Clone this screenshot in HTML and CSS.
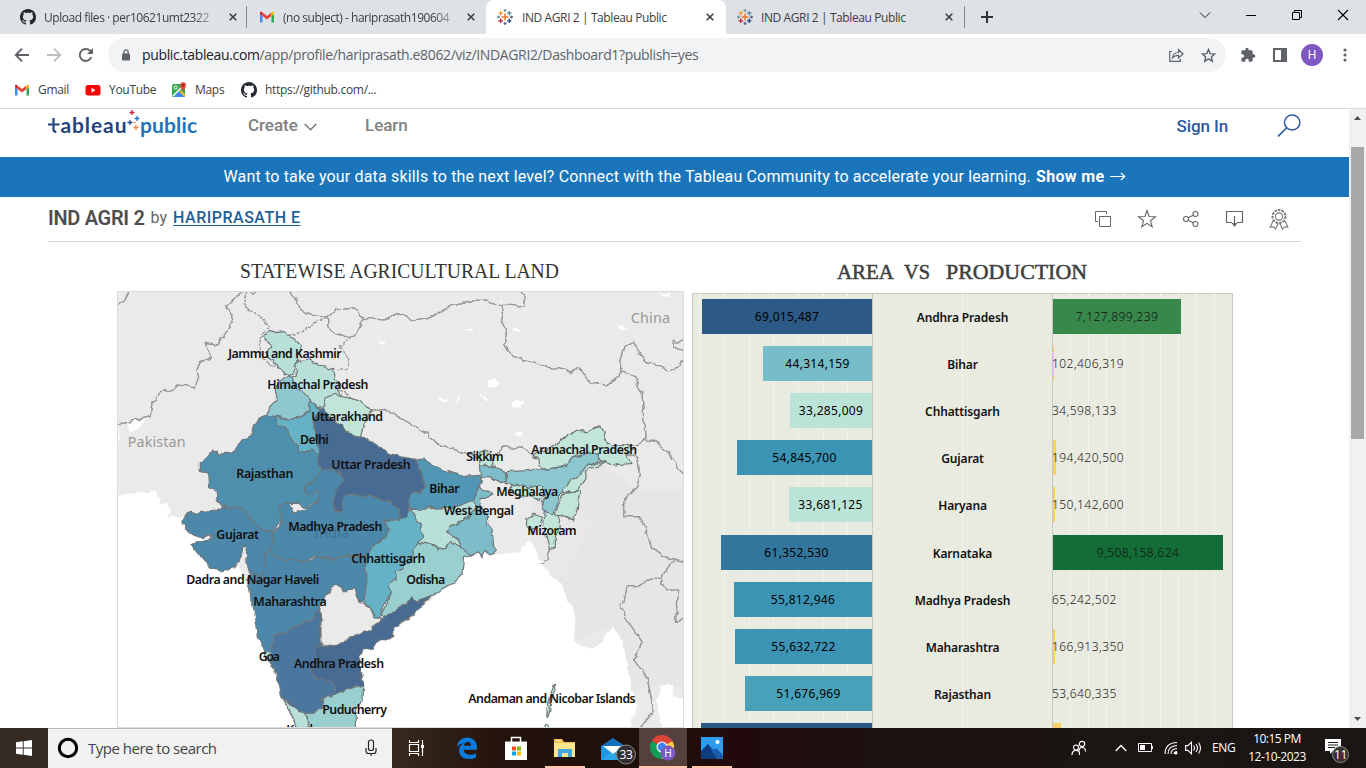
FILE: index.html
```html
<!DOCTYPE html>
<html lang="en">
<head>
<meta charset="utf-8">
<title>IND AGRI 2 | Tableau Public</title>
<link rel="stylesheet" href="styles.css">
</head>
<body>
<svg class="defs" width="0" height="0">
  <symbol id="github" viewBox="0 0 16 16"><path fill="#24292f" d="M8 0C3.58 0 0 3.58 0 8c0 3.54 2.29 6.53 5.47 7.59.4.07.55-.17.55-.38 0-.19-.01-.82-.01-1.49-2.01.37-2.53-.49-2.69-.94-.09-.23-.48-.94-.82-1.13-.28-.15-.68-.52-.01-.53.63-.01 1.08.58 1.23.82.72 1.21 1.87.87 2.33.66.07-.52.28-.87.51-1.07-1.78-.2-3.64-.89-3.64-3.95 0-.87.31-1.59.82-2.15-.08-.2-.36-1.02.08-2.12 0 0 .67-.21 2.2.82.64-.18 1.32-.27 2-.27s1.36.09 2 .27c1.53-1.04 2.2-.82 2.2-.82.44 1.1.16 1.92.08 2.12.51.56.82 1.27.82 2.15 0 3.07-1.87 3.75-3.65 3.95.29.25.54.73.54 1.48 0 1.07-.01 1.93-.01 2.2 0 .21.15.46.55.38A8.01 8.01 0 0 0 16 8c0-4.42-3.58-8-8-8z"/></symbol>
  <symbol id="gmail" viewBox="0 0 16 16"><path fill="#4285f4" d="M1 13.500h2.500V7L1 5z"/><path fill="#34a853" d="M12.500 13.500H15V5l-2.500 2z"/><path fill="#ea4335" d="M3.500 3.500 8 7l4.500-3.500V7L8 10.500 3.500 7z"/><path fill="#c5221f" d="M1 5V4c0-1.300 1.500-1.700 2.500-.5V7z"/><path fill="#fbbc04" d="M15 5V4c0-1.300-1.500-1.700-2.500-.5V7z"/></symbol>
  <symbol id="tableau" viewBox="0 0 16 16"><g fill="none" stroke-width="1.300"><path stroke="#eb762b" d="M8 4.500v7M4.500 8h7" stroke-width="1.500"/><path stroke="#e8a033" d="M3.700 2v4.500M1.500 4.200H6"/><path stroke="#5b879b" d="M12.300 2v4.500M10 4.200h4.500"/><path stroke="#c72035" d="M3.700 9.600v4.400M1.500 11.800H6"/><path stroke="#1f457e" d="M12.300 9.600v4.400M10 11.800h4.500"/><path stroke="#7199a6" d="M8 0v3M6.500 1.500h3M1.500 6.500v3M0 8h3"/><path stroke="#5c6692" d="M14.500 6.500v3M13 8h3M8 13v3M6.500 14.500h3"/></g></symbol>
  <symbol id="close" viewBox="0 0 8 8"><path stroke="#3c4043" stroke-width="1.600" d="m.7.7 6.600 6.600m0-6.600L.7 7.300"/></symbol>
</svg>

<header class="tabs">
  <div class="tab first"><svg class="i16"><use href="#github"/></svg><span class="label fade">Upload files · per10621umt2322</span><svg class="x"><use href="#close"/></svg></div>
  <div class="tab line"><svg class="i16"><use href="#gmail"/></svg><span class="label fade">(no subject) - hariprasath190604</span><svg class="x"><use href="#close"/></svg></div>
  <div class="tab active"><svg class="i16"><use href="#tableau"/></svg><span class="label t">IND AGRI 2 | Tableau Public</span><svg class="x"><use href="#close"/></svg></div>
  <div class="tab last"><svg class="i16"><use href="#tableau"/></svg><span class="label t">IND AGRI 2 | Tableau Public</span><svg class="x"><use href="#close"/></svg></div>
  <svg class="plus" width="12" height="12"><path stroke="#30343a" stroke-width="2" d="M6 0v12M0 6h12"/></svg>
  <div class="wctl">
    <svg width="12" height="12"><path fill="none" stroke="#222" d="m1 3.500 5 5 5-5"/></svg>
    <svg width="12" height="12"><path stroke="#000" d="M1 6.500h10"/></svg>
    <svg width="12" height="12"><path fill="none" stroke="#000" d="M1.500 3.500h7v7h-7zM3.500 3.500v-2h7v7h-2"/></svg>
    <svg width="12" height="12"><path stroke="#000" stroke-width="1.100" d="m1 1 10 10M11 1 1 11"/></svg>
  </div>
</header>

<div class="toolbar">
  <svg class="nav" width="80" height="16" viewBox="0 0 80 16"><g fill="none" stroke-width="1.900"><path stroke="#5f6368" d="M15 8H2m6-6.300L1.700 8 8 14.300"/><path stroke="#bcbfc3" d="M33 8h13m-6-6.300L46.300 8 40 14.300"/><path stroke="#5f6368" d="M77.300 10.200A6 6 0 1 1 76 3.700l1.700 2"/></g><path fill="#5f6368" d="M79 1v6h-6z"/></svg>
  <div class="omni">
    <svg width="8" height="12"><rect y="4.500" width="8" height="7" rx="1" fill="#5f6368"/><path fill="none" stroke="#5f6368" stroke-width="1.300" d="M1.900 5V3a2.100 2.100 0 0 1 4.200 0v2"/></svg>
    <span class="url"><b>public.tableau.com</b>/app/profile/hariprasath.e8062/viz/INDAGRI2/Dashboard1?publish=yes</span>
    <svg width="15" height="14"><g fill="none" stroke="#5f6368" stroke-width="1.200"><path d="M3 3.500H.7v9.800h10.600v-2.500"/><path d="M3.500 10c.3-4 2.500-5.500 6-5.500V1.700L14 6l-4.500 4V7.300C7 7.300 5 8 3.500 10z"/></g></svg>
    <svg width="15" height="15"><path fill="none" stroke="#5f6368" stroke-width="1.400" d="m7.500 1.500 1.700 4.100 4.500.4-3.400 2.900 1 4.400-3.800-2.400-3.800 2.400 1-4.400L1.300 6l4.500-.4z"/></svg>
  </div>
  <div class="ext">
    <svg width="16" height="16" viewBox="0 0 24 24"><path fill="#5f6368" d="M20.500 11H19V7c0-1.100-.9-2-2-2h-4V3.500a2.500 2.500 0 0 0-5 0V5H4c-1.100 0-2 .9-2 2v3.800h1.500a2.700 2.700 0 0 1 0 5.400H2V20c0 1.100.9 2 2 2h3.800v-1.500a2.700 2.700 0 0 1 5.400 0V22H17c1.100 0 2-.9 2-2v-4h1.500a2.500 2.500 0 0 0 0-5z"/></svg>
    <svg width="14" height="14"><path fill="#5f6368" fill-rule="evenodd" d="M0 0h14v14H0zM2 2v10h6V2z"/></svg>
    <span class="avatar">H</span>
    <svg width="4" height="14"><g fill="#5f6368"><circle cx="2" cy="2" r="1.600"/><circle cx="2" cy="7" r="1.600"/><circle cx="2" cy="12" r="1.600"/></g></svg>
  </div>
</div>

<nav class="bookmarks">
  <a class="bm gm"><svg class="i16"><use href="#gmail"/></svg>Gmail</a>
  <a class="bm yt"><svg class="i16"><rect x=".5" y="3" width="15" height="10.500" rx="2.500" fill="#f00"/><path fill="#fff" d="m6.500 5.700 4 2.500-4 2.500z"/></svg>YouTube</a>
  <a class="bm mp"><svg class="i16"><rect x="1" y="2" width="13" height="13" rx="1.500" fill="#34a853"/><path fill="#4285f4" d="M3 15 8.500 9l5.500 5v1z"/><path stroke="#f4f4f4" stroke-width="1.700" d="m2 14 10-10"/><path stroke="#fbc02d" stroke-width="2" d="m9 9 5 5"/><path fill="#e04436" d="M12 9.500C11 7 9.200 6 9.200 3.200a2.900 2.900 0 0 1 5.800 0C15 6 13 7 12 9.500z"/><circle cx="12.100" cy="3.200" r="1.100" fill="#8c2a24"/><circle cx="4.700" cy="5.500" r="1.600" fill="none" stroke="#fff"/></svg>Maps</a>
  <a class="bm gh"><svg class="i16"><use href="#github"/></svg>https://github.com/...</a>
</nav>

<main class="view">
  <div class="page">
    <div class="site">
      <svg class="logo" width="152" height="28" viewBox="0 0 152 28">
        <path fill="none" stroke="#1f447e" stroke-width="2.200" d="M0 15.500h11.500M5.500 9v11.500q0 2.300 2.800 2.300"/>
        <text x="12.500" y="23.500" textLength="66" class="lg dark">ableau</text>
        <g stroke-width="1.300"><path stroke="#274780" d="M79.500 13.500h5M82 11v5"/><path stroke="#c72035" d="M81.500 3.500h5M84 1v5"/><path stroke="#1f74ba" d="M86.500 9.500h5M89 7v5"/><path stroke="#eb8a45" d="M85.500 18.500h5M88 16v5M85.500 13.500h2"/></g>
        <text x="92" y="23.500" textLength="57" class="lg blue">public</text>
      </svg>
      <span class="menu create">Create</span><svg class="chev" width="13" height="8"><path fill="none" stroke="#777" stroke-width="1.500" d="m.7 1 5.800 5.700L12.300 1"/></svg>
      <span class="menu learn">Learn</span>
      <span class="signin">Sign In</span>
      <svg class="search" width="24" height="24"><ellipse cx="15.200" cy="8.500" rx="7.700" ry="7.500" fill="none" stroke="#2b59a0" stroke-width="1.500"/><path stroke="#2b59a0" stroke-width="1.700" d="M9.500 14 1 22.300"/></svg>
    </div>
    <div class="banner"><span class="msg">Want to take your data skills to the next level? Connect with the Tableau Community to accelerate your learning.</span><b>Show me</b><svg width="16" height="9"><path fill="none" stroke="#fff" stroke-width="1.200" d="M0 4.500h14.500M11 1l3.700 3.500L11 8"/></svg></div>
    <div class="titlebar">
      <span class="name">IND AGRI 2</span><span class="by">by</span><a class="author">HARIPRASATH E</a>
      <div class="acts">
        <svg width="18" height="18"><path fill="none" stroke="#666" d="M4 11.500H1.500v-10h11V4M5.500 6.500h11v10h-11z"/></svg>
        <svg width="20" height="20"><path fill="none" stroke="#666" stroke-width="1.100" d="m10 1.500 2.100 6 6.400.3-5 4 1.700 6-5.200-3.500-5.200 3.500 1.700-6-5-4 6.400-.3z"/></svg>
        <svg width="18" height="18"><g fill="none" stroke="#666" stroke-width="1.100"><circle cx="4" cy="9" r="2.500"/><circle cx="13.500" cy="4" r="2.500"/><circle cx="13.500" cy="14" r="2.500"/><path d="m6.200 7.800 5-2.600m-5 5 5 2.600"/></g></svg>
        <svg width="19" height="18"><path fill="none" stroke="#666" stroke-width="1.200" d="M7 12.500H1.500v-11h16v11H12M9.500 6v9"/><path fill="#666" d="M6.500 13h6l-3 4z"/></svg>
        <svg width="20" height="22"><g fill="none" stroke="#777" stroke-width="1.100"><circle cx="10" cy="8.500" r="6.500" stroke-width="1.900" stroke-dasharray="2.600 1"/><circle cx="10" cy="8.500" r="3.600"/><path d="m4 13-2.800 6 3.300-.3 2 2.300 2.700-5.500m6.800-2.500 2.800 6-3.300-.3-2 2.300-2.700-5.500"/></g></svg>
      </div>
    </div>

    <div class="dash">
      <section class="left">
        <svg class="heading" width="567" height="49"><text x="123" y="36" textLength="319" lengthAdjust="spacingAndGlyphs" class="h1">STATEWISE AGRICULTURAL LAND</text></svg>
        <svg class="map" width="567" height="437" viewBox="0 3 1701 1311">
          <defs><filter id="rough" x="0" y="0" width="1" height="1" color-interpolation-filters="sRGB"><feTurbulence type="fractalNoise" baseFrequency="0.04" numOctaves="2" seed="4"/><feDisplacementMap in="SourceGraphic" scale="18" xChannelSelector="R" yChannelSelector="G"/></filter></defs>
          <rect x="0" y="3" width="1701" height="1311" fill="#eaeaea"/>
          <g filter="url(#rough)">
            <rect x="-20" y="-20" width="1750" height="1360" fill="#eaeaea"/>
            <path fill="#e6e6e6" d="M1250 560 1450 520 1560 600 1704 600V1185L1540 1200 1489 1009 1369 1054 1344 919 1234 750z"/>
            <path fill="#f0f0f0" d="M760 30 1000 150 1150 110 1160 220 950 300 800 240zM1100 780 1360 620 1430 700 1340 860z" opacity=".3"/>
            <path fill="#fff" d="M-20 615 120 605 130 640 155 640 155 680 300 680 400 900 480 1150 600 1340-20 1340zM690 1340 700 1200 725 1100 800 1040 900 970 1025 850 1040 795 1159 789 1209 784 1234 748 1259 784 1279 834 1304 864 1335 880 1344 919 1369 954 1375 990 1369 1054 1419 1079 1449 1059 1489 1009 1514 1049 1529 1114 1544 1204 1564 1254 1540 1300V1340zM1630 1185 1665 1185 1670 1220 1730 1225V1340H1640L1620 1230zM35 400 90 385 60 420 35 425zM-20 415 8 415V445L0 450zM1110 273 1135 265 1148 278 1140 290 1115 288zM1185 333 1220 332 1205 350 1188 350zM1035 305 1015 340 1020 342zM963 322 990 330 985 337 965 335zM1085 310 1110 325 1105 330zM1065 112 1045 120 1068 125zM1215 118 1190 115 1192 125zM1500 112 1520 105 1530 120zM785 158 805 155 800 168zM1615 12 1660 10 1650 22zM1190 430 1220 425 1205 440zM1145 30 1158 27 1155 37z"/>
            <g fill="none" stroke="#fafafa" stroke-width="11"><use href="#borders"/></g>
            <g id="borders" fill="none" stroke="#999" stroke-width="3.500" stroke-linejoin="round">
              <path d="M0 45C20 40 32 25 32 0M415 0 410 15 395 0 360 20 325 45 345 75 340 110 325 130 300 165 265 160 270 180 285 200 250 215 240 240 245 260 235 290 180 285 165 300 130 305 105 335 100 380 60 390 20 400 0 410"/>
              <path d="M510 0 540 30 550 60 585 75 630 85 660 60 700 55 740 80 715 135 680 140 650 130 635 105 635 85M740 85 800 90 840 70 890 90 920 85 970 70 1000 45 1050 35 1090 30 1155 45 1222 48 1225 25 1205 0M1155 45 1160 75 1150 90 1165 120 1163 160 1180 190 1200 205 1250 215 1280 230 1320 235 1360 245 1385 235 1410 260 1420 280 1470 285 1510 260 1512 210 1525 165 1550 153 1565 185 1590 215 1620 225 1650 240 1680 230 1704 205M1704 185 1680 180 1665 155 1704 150M1512 240 1550 260 1575 310 1580 380 1585 450 1620 455 1670 510 1704 560M1585 440 1565 470 1515 460 1500 480 1560 500 1570 550 1560 590 1520 630 1520 680 1570 680 1585 720 1600 770 1640 800 1704 815M1670 810 1630 865 1600 865 1560 890 1530 890 1520 940 1510 950 1530 990 1575 1055 1560 1090 1550 1110 1590 1160 1600 1210 1610 1260 1550 1340M1630 865 1650 900 1685 900 1675 995 1704 980"/>
              <path d="M768 360 800 355 870 395 930 430 960 460 1000 475 1085 500M1125 510 1160 470 1220 475 1250 500M1300 780 1290 810 1270 820"/>
              <path stroke-dasharray="7 4" d="M395 0 380 50 415 70 440 90 455 110 430 140 430 180 435 210 475 230M515 135 560 125 600 95 630 85M700 140 670 170 695 210 690 240 660 240M670 300 710 330 760 355"/>
            </g>
            <g stroke="#6f7679" stroke-width="3.500" stroke-linejoin="round">
              <g fill="#b8dfd8">
                <path d="M443 135 460 122 480 128 505 125 515 140 530 145 550 165 553 185 545 195 545 215 530 235 530 252 515 257 497 245 483 235 475 220 455 205 448 185 462 175 450 160z"/>
                <path d="M553 210 575 208 605 225 625 228 635 240 650 235 655 265 668 280 665 300 675 318 650 312 625 322 620 345 625 356 600 352 590 338 575 320 555 305 530 285 525 262 538 255 537 225z"/>
                <path d="M878 662 909 704 917 740 905 757 949 764 960 778 990 775 1000 755 1034 772 1025 750 989 725 994 709 1039 694 1060 670 1080 655 1068 620 1050 620 1040 640 1000 650z"/>
                <path d="M492 1220 520 1245 560 1270 575 1290 570 1340 550 1340 520 1265z"/>
                <path d="M440 1083 460 1080 465 1095 462 1115 447 1108z"/>
              </g>
              <g fill="#c2e5da">
                <path d="M625 322 650 312 675 320 700 325 730 335 745 350 768 360 750 385 740 405 730 442 710 436 690 425 675 405 645 390 630 375 620 345z"/>
                <path d="M1085 490 1105 480 1120 485 1125 528 1090 525z"/>
                <path d="M1245 500 1260 490 1290 480 1320 460 1350 440 1380 420 1410 425 1450 405 1465 430 1460 450 1490 465 1530 462 1550 478 1530 495 1545 520 1490 525 1450 515 1440 490 1400 495 1370 500 1350 525 1320 530 1270 537 1265 505z"/>
                <path d="M1175 600 1190 585 1230 590 1280 585 1285 610 1270 625 1200 615zM1410 532 1440 518 1462 520 1405 545 1408 565 1380 605 1340 605 1328 612 1345 580 1370 565zM1340 610 1390 605 1390 620 1370 690 1350 680 1315 675 1325 640zM1285 665 1320 675 1330 710 1315 740 1315 775 1298 778 1290 750 1280 700zM1230 685 1255 670 1275 680 1270 705 1250 715 1245 730 1228 705z"/>
                <path d="M1312 1180 1314 1200 1302 1225 1298 1270 1290 1280 1290 1255 1304 1205zM1282 1310 1290 1305 1292 1325 1280 1325z"/>
              </g>
              <path fill="#8fc7ce" d="M515 257 525 262 530 285 555 305 575 320 580 330 575 345 580 360 545 385 520 388 490 380 445 378 455 350 480 325 475 300 487 270z"/>
              <path fill="#8cc6cf" d="M1168 545 1270 540 1320 530 1350 525 1370 500 1420 490 1440 490 1445 512 1410 530 1370 565 1340 595 1325 620 1322 640 1310 672 1280 662 1275 640 1285 610 1278 590 1230 588 1190 585 1168 580z"/>
              <path fill="#7dbdca" d="M1090 525 1130 530 1165 545 1168 575 1150 578 1130 568 1110 562 1092 568 1087 590 1095 600 1125 610 1110 625 1090 625 1085 645 1110 670 1112 700 1125 720 1132 790 1118 795 1105 780 1095 800 1085 785 1065 798 1050 785 1034 772 1025 750 989 725 994 709 1039 694 1060 670 1080 655 1070 635 1070 620 1095 575z"/>
              <path fill="#65b1c5" d="M583 332 600 352 610 358 592 385 597 440 608 490 595 492 585 480 560 488 545 485 540 465 520 450 512 420 500 410 480 408 475 380 520 388 545 385 580 362 575 345z"/>
              <path fill="#65b1c5" d="M850 685 879 659 909 704 917 740 905 757 890 775 880 810 860 834 832 840 835 870 815 880 822 914 800 940 790 979 775 982 765 960 740 935 735 910 750 875 745 830 750 800 770 765 800 745 820 715 800 695z"/>
              <path fill="#9acfd0" d="M905 757 949 764 960 778 990 775 1000 755 1034 772 1065 798 1040 802 1035 850 1010 880 985 890 950 915 939 917 900 935 885 920 870 945 849 950 835 960 800 980 790 979 822 914 815 880 835 870 832 840 860 834 880 810 890 775z"/>
              <path fill="#9acfd0" d="M560 1270 600 1265 617 1250 615 1225 655 1215 700 1195 737 1185 735 1225 715 1260 715 1340H580L575 1290z"/>
              <path fill="#5197b5" d="M899 508 925 508 940 525 980 540 1010 550 1050 558 1090 556 1095 575 1080 600 1070 635 1040 640 1010 655 940 652 900 662 875 655 880 620 924 590 910 540z"/>
              <path fill="#4f8fae" d="M445 375 475 380 480 408 500 410 512 420 525 450 540 465 545 485 560 488 585 480 595 492 608 495 605 520 615 540 600 560 570 585 565 605 605 600 610 630 565 655 545 640 515 640 490 645 495 690 480 715 465 725 430 715 415 704 375 655 317 650 300 630 297 600 278 595 275 550 250 545 250 520 270 500 285 480 300 482 303 495 350 485 375 450 405 430 420 390z"/>
              <path fill="#4c88a9" d="M615 540 640 540 670 545 685 570 665 590 655 610 665 625 700 615 770 620 800 632 830 640 850 660 850 688 800 695 820 715 800 745 770 765 750 799 720 795 680 800 640 805 605 797 580 803 560 820 545 810 500 808 470 798 455 780 470 755 465 728 490 715 495 690 490 645 515 640 530 670 575 655 610 630 605 600 570 612 565 600 570 585 600 560z"/>
              <path fill="#4c88a9" d="M375 655 317 650 300 660 215 668 190 690 195 705 210 705 205 720 235 738 260 745 285 735 275 750 225 762 230 775 260 810 285 835 310 843 350 830 370 810 378 770 388 770 390 820 400 850 430 860 445 830 440 800 455 780 470 755 465 728 430 715 415 704z"/>
              <path fill="#4c88a9" d="M455 780 440 800 445 830 430 860 400 850 395 870 402 930 410 970 420 1030 440 1083 465 1085 470 1040 495 1030 525 1020 550 1005 580 990 608 955 625 915 655 887 680 900 715 897 725 935 740 935 750 875 745 830 750 799 680 800 640 805 605 797 560 820 545 810 500 808 470 798z"/>
              <path fill="#4b779e" d="M608 955 580 990 550 1005 525 1020 495 1030 470 1040 465 1085 458 1110 470 1130 480 1160 490 1215 520 1245 560 1270 600 1265 617 1250 615 1225 655 1215 655 1190 640 1170 600 1170 585 1145 585 1120 600 1110 590 1090 612 1065 612 1000z"/>
              <path fill="#486b93" d="M610 358 625 356 630 375 645 390 675 405 690 425 710 436 730 442 760 450 790 475 820 490 849 500 880 505 899 508 910 540 924 590 880 620 875 655 870 680 850 688 850 660 830 640 800 632 770 620 700 615 680 622 675 668 660 668 647 640 655 610 665 590 685 570 670 545 615 540 605 520 608 490 597 440 592 385z"/>
              <path fill="#486b93" d="M939 917 910 955 880 980 849 1000 830 1015 830 1040 780 1055 765 1075 740 1080 728 1100 730 1140 737 1185 700 1195 655 1212 655 1190 640 1170 600 1170 585 1145 585 1120 600 1110 590 1090 595 1068 640 1070 690 1055 700 1040 745 1025 780 1000 800 980 835 960 849 950 870 945 885 920 900 935z"/>
              <path fill="#eaeaea" d="M608 955 625 915 655 887 680 900 715 897 725 935 760 955 770 980 790 985 780 1000 745 1025 700 1040 690 1055 640 1070 612 1065 612 1000z"/>
            </g>
          </g>
          <g class="country"><text x="32" y="472" textLength="174">Pakistan</text><text x="1541" y="100" textLength="118">China</text><text x="592" y="744" textLength="104" class="faint">India</text></g>
          <g class="st">
            <text x="334" y="203" textLength="340">Jammu and Kashmir</text><text x="451" y="296" textLength="303">Himachal Pradesh</text><text x="583" y="392" textLength="215">Uttarakhand</text><text x="549" y="461" textLength="86">Delhi</text><text x="358" y="563" textLength="171">Rajasthan</text><text x="643" y="536" textLength="238">Uttar Pradesh</text><text x="937" y="608" textLength="91">Bihar</text><text x="1048" y="514" textLength="112">Sikkim</text><text x="1243" y="491" textLength="317">Arunachal Pradesh</text><text x="1138" y="617" textLength="186">Meghalaya</text><text x="980" y="674" textLength="211">West Bengal</text><text x="1231" y="734" textLength="148">Mizoram</text><text x="298" y="746" textLength="128">Gujarat</text><text x="514" y="722" textLength="282">Madhya Pradesh</text><text x="703" y="819" textLength="222">Chhattisgarh</text><text x="868" y="881" textLength="117">Odisha</text><text x="208" y="881" textLength="399">Dadra and Nagar Haveli</text><text x="409" y="947" textLength="220">Maharashtra</text><text x="425" y="1113" textLength="64">Goa</text><text x="531" y="1133" textLength="270">Andhra Pradesh</text><text x="616" y="1271" textLength="194">Puducherry</text><text x="1054" y="1238" textLength="502">Andaman and Nicobar Islands</text><text x="508" y="1333" textLength="98">Kerala</text>
          </g>
        </svg>
      </section>

      <section class="right">
        <svg class="heading" width="541" height="51"><g class="h2"><text x="145" y="37" textLength="57" lengthAdjust="spacingAndGlyphs">AREA</text><text x="212" y="37" textLength="26" lengthAdjust="spacingAndGlyphs">VS</text><text x="254" y="37" textLength="141" lengthAdjust="spacingAndGlyphs">PRODUCTION</text></g></svg>
        <div class="chart">
          <div class="row"><div class="a"><i style="width:170px;background:#2c5985">69,015,487</i></div><div class="s">Andhra Pradesh</div><div class="p"><i style="width:128px;background:#38884b"></i><span style="width:128px" class="mid">7,127,899,239</span></div></div>
          <div class="row"><div class="a"><i style="width:109px;background:#77bdc8">44,314,159</i></div><div class="s">Bihar</div><div class="p"><i style="width:1px"></i><span>102,406,319</span></div></div>
          <div class="row"><div class="a"><i style="width:82px;background:#bbe4d8">33,285,009</i></div><div class="s">Chhattisgarh</div><div class="p"><span>34,598,133</span></div></div>
          <div class="row"><div class="a"><i style="width:135px;background:#3b94b4">54,845,700</i></div><div class="s">Gujarat</div><div class="p"><i style="width:3px"></i><span>194,420,500</span></div></div>
          <div class="row"><div class="a"><i style="width:83px;background:#bbe4d8">33,681,125</i></div><div class="s">Haryana</div><div class="p"><i style="width:2px"></i><span>150,142,600</span></div></div>
          <div class="row gap"><div class="a"><i style="width:151px;background:#32769d">61,352,530</i></div><div class="s">Karnataka</div><div class="p"><i style="width:170px;background:#146c36"></i><span style="width:170px" class="mid">9,508,158,624</span></div></div>
          <div class="row"><div class="a"><i style="width:138px;background:#3b94b4">55,812,946</i></div><div class="s">Madhya Pradesh</div><div class="p"><span>65,242,502</span></div></div>
          <div class="row"><div class="a"><i style="width:137px;background:#3b94b4">55,632,722</i></div><div class="s">Maharashtra</div><div class="p"><i style="width:2px"></i><span>166,913,350</span></div></div>
          <div class="row"><div class="a"><i style="width:127px;background:#47a2b9">51,676,969</i></div><div class="s">Rajasthan</div><div class="p"><span>53,640,335</span></div></div>
          <div class="row"><div class="a"><i style="width:171px;background:#2b5783"></i></div><div class="s"></div><div class="p"><i style="width:8px"></i></div></div>
        </div>
      </section>
    </div>
  </div>
  <div class="scroll">
    <svg width="17" height="17"><path fill="#505050" d="m5 11 3.500-4 3.500 4z"/></svg>
    <div class="thumb"></div>
    <svg class="down" width="17" height="17"><path fill="#505050" d="m5 6 3.500 4L12 6z"/></svg>
  </div>
</main>

<footer class="taskbar">
  <div class="start"><svg width="16" height="16"><path fill="#fff" d="m0 2.300 6.800-1v6.200H0zM7.700 1.200 16 0v7.500H7.700zM0 8.400h6.800v6.300L0 13.700zM7.700 8.400H16V16l-8.300-1.200z"/></svg></div>
  <div class="find"><svg width="22" height="22"><circle cx="11" cy="11" r="8.700" fill="none" stroke="#000" stroke-width="3"/></svg><span>Type here to search</span><svg class="mic" width="12" height="18"><g fill="none" stroke="#222" stroke-width="1.200"><rect x="3.500" y="1" width="5" height="10.500" rx="2.300"/><path d="M1 9v3q0 2.500 2.500 2.500h5Q11 14.500 11 12V9M6 14.500V17"/></g></svg></div>
  <div class="app tv"><svg width="17" height="16"><g fill="none" stroke="#fff" stroke-width="1.200"><path d="M1.500 0v2.500h9V0M1.500 16v-2.500h9V16M1.500 4.500h9v7h-9zM14.500 0v16"/></g><path fill="#fff" d="M13 5h3v3h-3z"/></svg></div>
  <div class="app edge"><svg width="22" height="22"><path fill="#0a7bdc" d="M1 10C1.500 4 6 .5 11 .5c6 0 10 4 10 9.500v2.800H7.800c.3 3.600 3.200 5 6.500 5 2.200 0 4-.5 5.700-1.500v4.200c-2 1-4 1.500-6.700 1.500C7 22 3 18.500 3 13.500c0-3.500 2-6 4.500-7.300C4.500 6.500 2.200 8 1 10zm7-1.200h7C15 6.300 13.800 5 11.500 5 9.500 5 8.200 6.700 8 8.800z"/></svg></div>
  <div class="app store"><svg width="24" height="24"><path fill="none" stroke="#fff" stroke-width="1.500" d="M7.500 7V1.500h9V7"/><path fill="#fff" d="M1 5.500h22V24H1z"/><path fill="#f25022" d="M8 10.500h4v4H8z"/><path fill="#7fba00" d="M13 10.500h4v4h-4z"/><path fill="#00a4ef" d="M8 15.500h4v4H8z"/><path fill="#ffb900" d="M13 15.500h4v4h-4z"/></svg></div>
  <div class="app files open"><svg width="22" height="20"><path fill="#f3c04c" d="M0 1h8l2 3h11v3H0z"/><path fill="#fde48f" d="M0 5h21v14H0z"/><path fill="#3fa9e0" d="M4 19v-8h14v8h-4v-4H8v4z"/><path fill="#fff" d="M2 2h5v1H2z" opacity=".7"/></svg></div>
  <div class="app mail"><svg width="36" height="28"><path fill="#1270bf" d="M1 9 13 1l12 8z"/><path fill="#28a8ea" d="M1 9h24v14H1z"/><path fill="#fff" d="M3 9h20L13 17z"/><path fill="#0f7fd0" d="M1 9v14l10-8z" opacity=".4"/><circle cx="26" cy="17.500" r="9.500" fill="#2f2f31" stroke="#888"/><text x="26" y="22" class="count">33</text></svg></div>
  <div class="app chrome open on"><svg width="26" height="26"><path fill="#db4437" d="M12 12 1.600 6A12 12 0 0 1 22.400 6z"/><path fill="#0f9d58" d="M12 12v12A12 12 0 0 1 1.600 6z"/><path fill="#ffcd40" d="M12 12 22.400 6A12 12 0 0 1 12 24z"/><path fill="#db4437" d="M12 6.500h10.600L22 5H12z"/><circle cx="12" cy="12" r="5.500" fill="#fff"/><circle cx="12" cy="12" r="4.400" fill="#4285f4"/><circle cx="18" cy="18" r="7.500" fill="#7e57c2"/><text x="18" y="21.500" class="pf">H</text></svg></div>
  <div class="app photos open"><svg width="22" height="22"><rect width="22" height="22" fill="#2e9df0"/><path fill="#1564b8" d="m0 15 7-8 15 15H0z"/><path fill="#0d3d7d" d="m0 14 7-7 9 15H0z"/><path fill="#1a5ca8" d="m11 15 4-4 7 7v4h-5z"/><circle cx="16.500" cy="5" r="2" fill="#fff"/></svg></div>
  <div class="tray">
    <svg class="people" width="16" height="16"><g fill="none" stroke="#fff" stroke-width="1.200"><circle cx="11" cy="4" r="2.700"/><path d="M8 11.500q0-4 3-4 3.500 0 3.500 4"/><circle cx="5" cy="7.500" r="2.500"/><path d="M1 15q0-4.500 4-4.500T8.500 15"/></g></svg>
    <svg class="up" width="12" height="8"><path fill="none" stroke="#fff" stroke-width="1.300" d="m.7 7 5.300-5.500L11.300 7"/></svg>
    <svg class="bat" width="16" height="10"><path fill="none" stroke="#fff" d="M.5.5h13v8H.5zM14.500 3v3"/><path fill="#fff" d="M2 2h5v5H2z"/></svg>
    <svg class="wifi" width="14" height="14"><g fill="none" stroke="#fff" stroke-width="1.100"><path d="M1 13Q1 2 13 1.500M4 13Q4 5 13 4.500M7 13q0-5 6-5.500M10 13q0-2.300 3-2.500" /></g><circle cx="12" cy="12" r="1.500" fill="#fff"/></svg>
    <svg class="vol" width="17" height="14"><g fill="none" stroke="#fff" stroke-width="1.100"><path d="M.6 4.600h2.200L6.500 1.200v11.600L2.800 9.400H.6zM8.500 4.500q2 2.500 0 5M11 3q3 4 0 8M13.500 1.500q4 5.500 0 11"/></g></svg>
    <span class="lang">ENG</span>
    <div class="clock"><span>10:15 PM</span><span>12-10-2023</span></div>
    <svg class="note" width="26" height="26"><path fill="#fff" d="M1 1h16v12H9l-3 3v-3H1z"/><path stroke="#222" d="M4 4.500h10M4 7h10M4 9.500h7"/><circle cx="16.500" cy="16.500" r="8" fill="#333" stroke="#888"/><text x="16.500" y="21" class="count">11</text></svg>
  </div>
</footer>
</body>
</html>
```

FILE: styles.css
```css
* { box-sizing: border-box; }
html, body { margin: 0; height: 768px; overflow: hidden; }
body { width: 1366px; display: flex; flex-direction: column; background: #fff; font-family: "Open Sans", "Noto Sans", sans-serif; white-space: nowrap; }
svg { display: block; flex: none; }
.defs { display: none; }
.i16 { width: 16px; height: 16px; }

/* browser tabs */
.tabs { height: 34px; flex: none; background: #dee1e6; display: flex; align-items: center; font-size: 12px; color: #3c4043; }
.tab { height: 34px; display: flex; align-items: center; padding-left: 12px; border-right: 1px solid transparent; }
.tab.first { width: 247px; padding-left: 20px; }
.tab.line { width: 239px; }
.tab.first, .tab.last { border-image: linear-gradient(transparent 7px, #85888d 7px, #85888d 27px, transparent 27px) 1; border-left: 0; border-top: 0; border-bottom: 0; }
.tab.active { width: 240px; background: #fff; border-radius: 8px 8px 0 0; padding-left: 11px; }
.tab.last { width: 239px; padding-left: 11px; }
.label { margin-left: 8px; width: 171px; overflow: hidden; letter-spacing: -.47px; }
.label.t { letter-spacing: -.4px; margin-left: 9px; width: 184px; }
.last .label.t { margin-left: 8px; }
.first .label { width: 173px; margin-right: 12px; }
.line .label { width: 174px; margin-right: 10px; }
.fade { -webkit-mask-image: linear-gradient(90deg, #000 86%, rgba(0,0,0,.15)); mask-image: linear-gradient(90deg, #000 86%, rgba(0,0,0,.15)); }
.x { width: 8px; height: 8px; }
.plus { margin-left: 16px; }
.wctl { display: flex; gap: 34px; margin-left: auto; margin-right: 17px; padding-bottom: 5px; }

/* address row */
.toolbar { height: 42px; flex: none; display: flex; align-items: center; }
.nav { margin-left: 14px; }
.omni { width: 1118px; height: 34px; margin-left: 14px; border-radius: 17px; background: #f1f3f4; display: flex; align-items: center; padding: 0 10px 0 14px; }
.url { font-size: 14px; color: #5f6368; margin: 0 auto 0 12px; letter-spacing: -.36px; padding-bottom: 1px; }
.url b { color: #202124; font-weight: 400; }
.omni svg + svg { margin-left: 17px; }
.ext { display: flex; align-items: center; margin-left: 14px; }
.ext svg:nth-child(2) { margin-left: 17px; }
.avatar { width: 22px; height: 22px; border-radius: 50%; background: #7e57c2; color: #fff; font: 12px/22px Roboto, sans-serif; text-align: center; margin: 0 20px 0 14px; }

.bookmarks { height: 33px; flex: none; border-bottom: 1px solid #d9dadc; display: flex; align-items: center; padding: 0 0 5px 14px; font-size: 12px; color: #3c4043; }
.bm { display: flex; gap: 8px; align-items: center; letter-spacing: -.3px; }
.gm { width: 71px; }
.yt { width: 86px; }
.mp { width: 70px; }

/* page */
.view { height: 619px; flex: none; display: flex; overflow: hidden; }
.page { width: 1349px; }
.scroll { width: 17px; background: #f1f1f1; display: flex; flex-direction: column; align-items: center; }
.thumb { width: 13px; height: 292px; margin-top: 21px; background: #a8a8a8; }
.down { margin-top: auto; }
.site { height: 48px; display: flex; align-items: flex-start; font-family: Roboto, sans-serif; font-weight: 500; font-size: 17px; }
.logo { margin-left: 48px; }
.lg { font: 700 21px Lato, sans-serif; }
.dark { fill: #1f447e; }
.blue { fill: #1d76bc; }
.menu { color: #818181; line-height: 33px; letter-spacing: -.05px; }
.create { margin-left: 48px; width: 51px; }
.chev { margin: 14px 0 0 5px; }
.learn { margin-left: 48px; }
.signin { color: #2b59a0; line-height: 35px; margin-left: auto; letter-spacing: -.1px; }
.search { margin: 5px 48px 0 49px; }
.banner { height: 40px; background: #1b75bb; color: #fff; display: flex; align-items: center; justify-content: center; font: 16px/39px Roboto, sans-serif; gap: 5px; padding-bottom: 2px; letter-spacing: .17px; }
.banner b { letter-spacing: .35px; }
.titlebar { height: 45px; margin: 0 48px; border-bottom: 1px solid #d6d6d6; display: flex; align-items: center; font-family: Roboto, sans-serif; padding-bottom: 3px; }
.name { font-size: 20px; font-weight: 600; color: #4e4e4e; letter-spacing: -.3px; }
.by { font-size: 16px; color: #666; margin: 0 6px; }
.author { font-size: 16px; font-weight: 500; color: #1f5f98; text-decoration: underline; text-underline-offset: 2px; letter-spacing: .5px; }
.acts { margin-left: auto; display: flex; gap: 25px; align-items: center; margin-right: 12px; padding-top: 2px; }
.dash { display: flex; padding-left: 117px; }
.left { width: 567px; margin-right: 8px; }
.right { width: 541px; }
.h1 { font: 21px "Liberation Serif", serif; fill: #333; }
.h2 { font: 20px "Liberation Serif", serif; fill: #404040; stroke: #404040; stroke-width: .5px; }
.map { outline: 1px solid #dcdcdc; outline-offset: -1px; }
.country { font: 43px "Noto Sans", sans-serif; fill: #999; }
.faint { fill: #3f7395; }
.st { font: 600 37px "Noto Sans", sans-serif; fill: #111; }

/* bar chart */
.chart { height: 440px; border: 1px solid #c6c8c6; background: #e9eae0; }
.row { display: grid; grid-template-columns: 180px 180px 179px; height: 47px; align-items: stretch; font: 12px "Noto Sans", sans-serif; color: #111; margin-top: -1px; margin-bottom: 1px; }
.row > div { display: flex; align-items: center; }
.row i { height: 35px; font-style: normal; line-height: 35px; text-align: center; background: #f6cf65; }
.row.gap { height: 48px; padding-top: 1px; }
.a { justify-content: flex-end; border-right: 1px solid #c6c8c6; background: repeating-linear-gradient(270deg, transparent 0 23.7px, #f2f3ee 23.7px 24.7px); letter-spacing: .3px; }
.row .a { color: #000; }
.s { justify-content: center; border-right: 1px solid #c6c8c6; font-weight: 600; letter-spacing: -.14px; padding-top: 1px; background: linear-gradient(90deg, transparent 89px, #f1f2ec 89px 90px, transparent 90px); }
.row .p { background: repeating-linear-gradient(90deg, transparent 0 17px, #f2f3ee 17px 18px); display: grid; grid-template: 35px / 1fr; align-content: center; letter-spacing: .45px; }
.p > * { grid-area: 1 / 1; }
.p span { line-height: 35px; color: #222; font-weight: 300; margin-left: -1px; }
.p .mid { text-align: center; color: #111; margin: 0; }

/* taskbar */
.taskbar { height: 40px; flex: none; display: flex; align-items: center; background: linear-gradient(90deg, #352b24 0, #36281d 400px, #24130c 500px, #1f100b 640px, #220a0c 740px, #1c1212 900px, #1b1514 1100px, #1a1614); color: #fff; }
.start { width: 48px; padding-left: 16px; }
.find { width: 344px; height: 40px; background: #f1f1f1; border-top: 1px solid #b9b9b9; color: #444; display: flex; align-items: center; padding: 0 0 2px 9px; font-size: 15px; }
.find span { margin-left: 9px; letter-spacing: -.5px; }
.mic { margin-left: auto; margin-right: 15px; }
.app { height: 40px; display: flex; align-items: center; justify-content: center; border-bottom: 2px solid transparent; padding-top: 2px; }
.tv { width: 48px; }
.edge { width: 51px; padding-left: 2px; }
.store { width: 49px; }
.files { width: 40px; margin-left: 5px; }
.mail { width: 50px; margin-left: 4px; padding-left: 8px; padding-top: 8px; }
.chrome { width: 48px; }
.open { border-bottom-color: #ffc6a7; }
.on { background: #54403d; }
.photos { width: 40px; margin-left: 5px; }
.count { font: 12px "Open Sans", sans-serif; fill: #fff; text-anchor: middle; letter-spacing: -.3px; }
.pf { font: 10px Roboto, sans-serif; fill: #fff; text-anchor: middle; }
.tray { margin-left: auto; display: flex; align-items: center; }
.people { margin-right: 1px; }
.up { margin-left: 27px; }
.bat { margin-left: 11px; }
.wifi { margin-left: 10px; }
.vol { margin-left: 7px; }
.lang { font-size: 12px; margin-left: 10px; width: 24px; letter-spacing: -.3px; padding-bottom: 1px; }
.clock { display: flex; flex-direction: column; align-items: center; font-size: 12px; line-height: 18px; letter-spacing: -.5px; width: 60px; margin-left: 11px; padding-bottom: 1px; }
.note { margin: 5px 16px 0 17px; }
```
